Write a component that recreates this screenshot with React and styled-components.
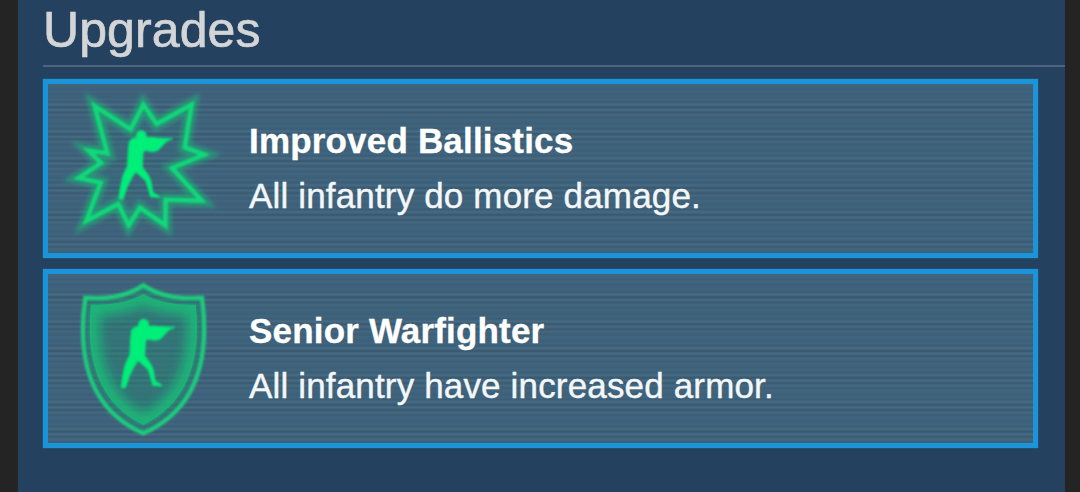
import styled, { createGlobalStyle } from 'styled-components'

const GlobalStyle = createGlobalStyle`
    body {
        margin: 0;
        background: #242424;
        font-family: 'Liberation Sans', Arial, sans-serif;
    }
`

const Panel = styled.main`
    box-sizing: border-box;
    height: 492px;
    margin: 0 15px 0 18px;
    padding-left: 25px;
    background: #24425f;
    overflow: hidden;
`

const Title = styled.h2`
    box-sizing: border-box;
    height: 67px;
    margin: 0 0 12px;
    border-bottom: 2px solid #4b6580;
    color: #d3d5d7;
    font-size: 50px;
    font-weight: 400;
    letter-spacing: 0.1px;
    line-height: 60px;
    -webkit-text-stroke: 0.7px #d3d5d7;
`

const List = styled.div`
    display: flex;
    flex-direction: column;
    gap: 11px;
    width: 995px;
`

const Card = styled.section`
    box-sizing: border-box;
    display: flex;
    height: 179px;
    border: 5px solid #1b94da;
    box-shadow: 0 0 1px #1b94da;
    background: repeating-linear-gradient(
        #40637d 0px,
        #3d607a 2px,
        #42657e 4.5px,
        #3b5e78 7px,
        #486b84 9.5px,
        #36586f 12.3px,
        #486b84 14.8px,
        #385a72 17.3px,
        #456880 19.8px,
        #3c5f79 22.5px,
        #42657e 24.7px,
        #40637d 26.9px
    ) 0 11px padding-box;
`

const Icon = styled.svg`
    flex: none;
    width: 178px;
    height: 168px;
`

const Info = styled.div`
    padding: 37px 0 0 23px;
    color: #f4f7f8;
    font-size: 35px;
    white-space: nowrap;
`

const Name = styled.h3`
    margin: 0;
    color: #fff;
    font-size: 35px;
    letter-spacing: 0.18px;
    line-height: 40px;
    -webkit-text-stroke: 0.3px #fff;
`

const Text = styled.p`
    margin: 15px 0 0;
    letter-spacing: 0.16px;
    line-height: 40px;
    -webkit-text-stroke: 0.4px #f4f7f8;
`

const burst = 'M134 84 L242 154 L280 80 L320 138 L425 80 L404 208 L463 230 L366 270 L455 368 L347 365 L346 442 L270 389 L236 442 L205 378 L109 429 L152 314 L86 300 L153 255 L115 217 L172 226 Z'
const shield = 'M106 89 Q211 98 280 52 Q349 98 456 89 C479 265 444 424 280 496 C116 424 81 265 106 89 Z'
const innerShield = 'M123 110 Q216 114 280 79 Q344 114 437 110 C454 263 420 404 280 471 C140 404 106 263 123 110 Z'

function Soldier(props) {
    return (
        <g fill="#00ef78" stroke="#00ef78" strokeWidth="3" strokeLinejoin="round" filter="url(#soften)" {...props}>
            <path d="M259 174 Q261 158 273 158 Q287 159 288 171 L289 180 Q303 176 320 180 L368 182 L350 189 Q337 203 324 217 L307 221 L287 217 L279 222 L277 267 L294 291 Q304 306 305 325 L308 343 L328 355 L328 358 L302 356 L294 328 L288 309 L265 288 L257 281 L246 298 L232 325 L219 363 L207 363 L211 331 L219 294 L233 263 L235 218 L238 190 Q244 181 259 179 Z" />
        </g>
    )
}

function BallisticsIcon() {
    return (
        <Icon viewBox="-6 18 534 504">
            <defs>
                <filter id="soften"><feGaussianBlur stdDeviation="2.6" /></filter>
                <filter id="burstGlow" x="-20%" y="-20%" width="140%" height="140%"><feGaussianBlur stdDeviation="6" /></filter>
            </defs>
            <path d={burst} fill="#18b878" fillOpacity=".12" stroke="#14c576" strokeWidth="38" strokeMiterlimit="5" opacity=".48" filter="url(#burstGlow)" />
            <path d={burst} fill="none" stroke="#10db78" strokeWidth="13" filter="url(#soften)" />
            <Soldier />
        </Icon>
    )
}

function ShieldIcon() {
    return (
        <Icon viewBox="-6 18 534 504">
            <defs>
                <clipPath id="shieldClip"><path d={innerShield} /></clipPath>
                <filter id="shieldGlow" x="-20%" y="-20%" width="140%" height="140%"><feGaussianBlur stdDeviation="17" /></filter>
            </defs>
            <path d={shield} fill="#1c9a70" opacity=".32" />
            <g clipPath="url(#shieldClip)">
                <path d={innerShield} fill="none" stroke="#16c978" strokeWidth="62" filter="url(#shieldGlow)" opacity=".75" />
            </g>
            <path d={innerShield} fill="none" stroke="#18be79" strokeWidth="6" opacity=".45" filter="url(#soften)" />
            <path d={shield} fill="none" stroke="#1bcd7c" strokeWidth="13" filter="url(#soften)" />
            <Soldier transform="translate(7 -4)" />
        </Icon>
    )
}

export default function App() {
    return (
        <>
            <GlobalStyle />
            <Panel>
                <Title>Upgrades</Title>
                <List>
                    <Card>
                        <BallisticsIcon />
                        <Info>
                            <Name>Improved Ballistics</Name>
                            <Text>All infantry do more damage.</Text>
                        </Info>
                    </Card>
                    <Card>
                        <ShieldIcon />
                        <Info>
                            <Name>Senior Warfighter</Name>
                            <Text>All infantry have increased armor.</Text>
                        </Info>
                    </Card>
                </List>
            </Panel>
        </>
    )
}
